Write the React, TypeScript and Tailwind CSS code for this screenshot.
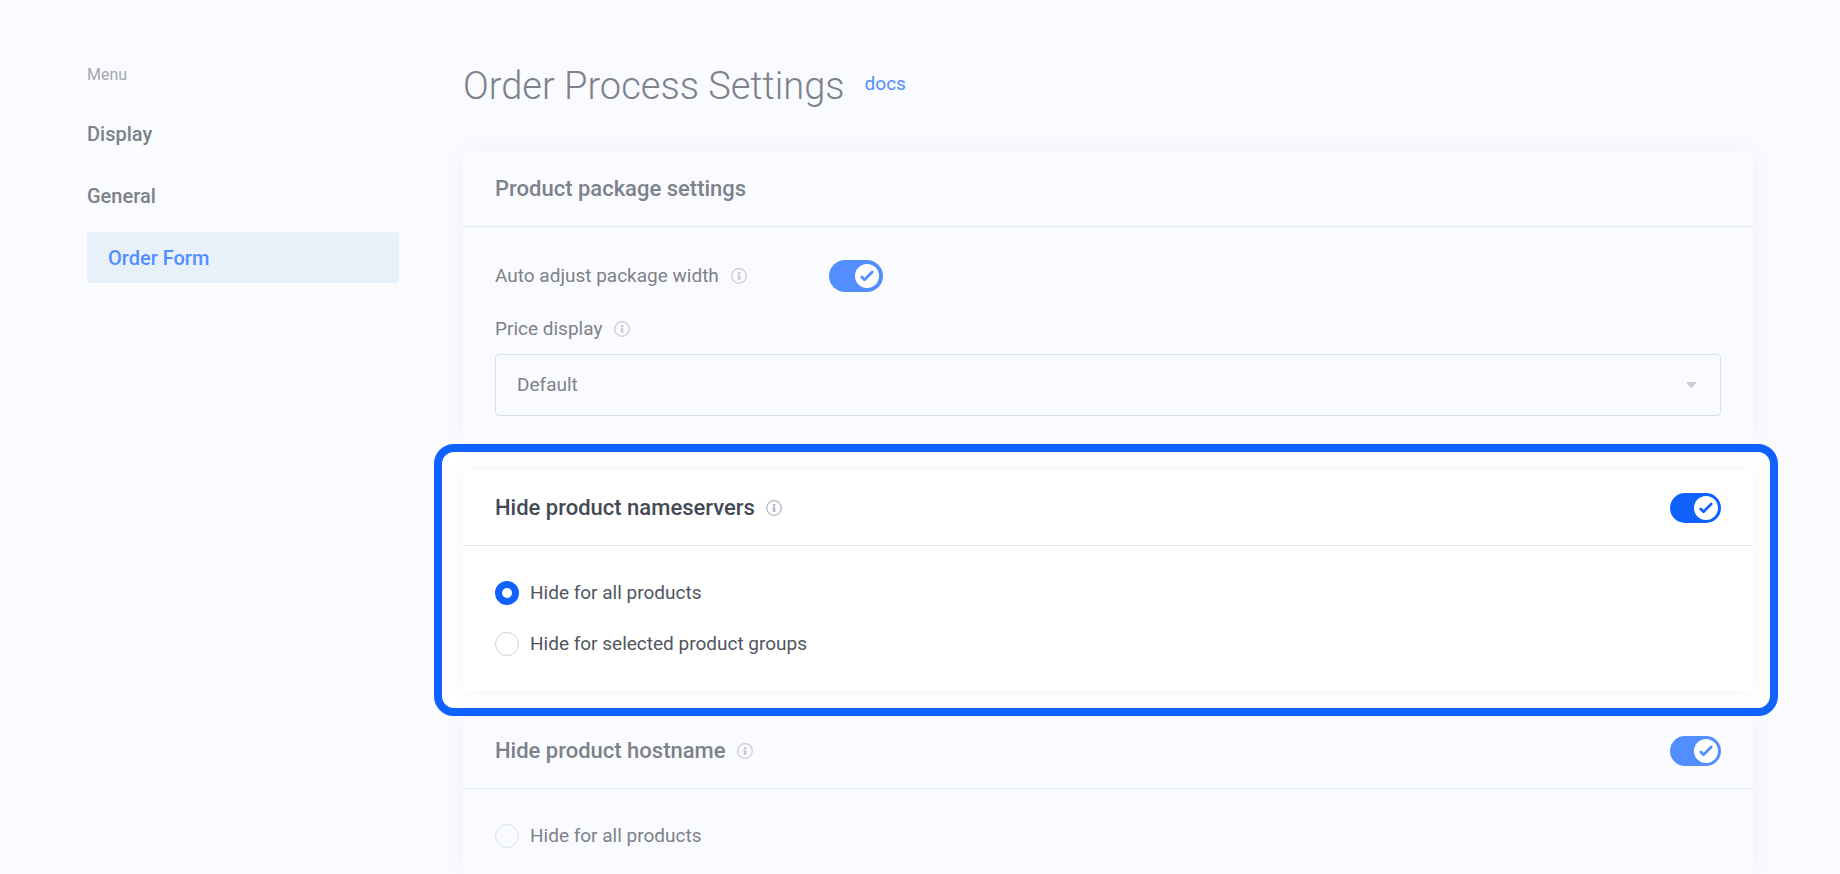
import { useState, type ReactNode } from "react";

function InfoIcon({ muted = false }: { muted?: boolean }) {
  return (
    <svg
      viewBox="0 0 16 16"
      className={`size-4 shrink-0 ${muted ? "text-[#c9ccd4]" : "text-[#b4b8c2]"}`}
      fill="none"
      aria-hidden="true"
    >
      <circle cx="8" cy="8" r="7.3" stroke="currentColor" strokeWidth="1.3" />
      <rect x="6.8" y="4" width="2.6" height="2.4" fill="currentColor" />
      <path d="M6.2 7.2h3.2v4.8H6.8V8.6h-.6z" fill="currentColor" />
    </svg>
  );
}

function Toggle({ label, large = false, muted = false }: { label: string; large?: boolean; muted?: boolean }) {
  const [on, setOn] = useState(true);
  const track = on ? (muted ? "bg-[#538eff]" : "bg-[#0f62fe]") : "bg-[#d5dae3]";
  return (
    <button
      type="button"
      role="switch"
      aria-checked={on}
      aria-label={label}
      onClick={() => setOn(!on)}
      className={`flex shrink-0 items-center rounded-full ${large ? "h-8 w-[54px] px-1" : "h-[30px] w-[51px] px-[3px]"} ${
        on ? "justify-end" : "justify-start"
      } ${track}`}
    >
      <span className="flex size-6 items-center justify-center rounded-full bg-white">
        <svg
          viewBox="0 0 14 12"
          className={`h-3 w-3.5 ${muted ? "text-[#538eff]" : "text-[#0f62fe]"}`}
          fill="none"
          stroke="currentColor"
          strokeWidth="2.7"
          strokeLinecap="round"
          strokeLinejoin="round"
          aria-hidden="true"
        >
          <path d="M1.8 7 4.5 9.7 12.2 2" />
        </svg>
      </span>
    </button>
  );
}

function Radio({
  name,
  label,
  checked,
  onSelect,
  muted = false,
}: {
  name: string;
  label: string;
  checked: boolean;
  onSelect: () => void;
  muted?: boolean;
}) {
  return (
    <label className={`flex h-6 items-center gap-[11px] text-[19px] leading-6 ${muted ? "text-[#7d818b]" : "text-[#505560]"}`}>
      <input
        type="radio"
        name={name}
        checked={checked}
        onChange={onSelect}
        className={`size-6 shrink-0 appearance-none rounded-full border bg-transparent checked:border-[7px] checked:border-[#0f62fe] checked:bg-white ${
          muted ? "border-[#d9dfea]" : "border-[#cfd4e0]"
        }`}
      />
      {label}
    </label>
  );
}

function Card({
  title,
  info = false,
  toggle = false,
  muted = false,
  className,
  children,
}: {
  title: string;
  info?: boolean;
  toggle?: boolean;
  muted?: boolean;
  className: string;
  children: ReactNode;
}) {
  return (
    <section className={`shadow-[0_0_20px_rgba(50,60,80,0.06)] ${muted ? "bg-[#fafbff]" : "bg-white"} ${className}`}>
      <header
        className={`flex h-[76px] items-center justify-between border-b px-8 ${muted ? "border-[#e3e9f2]" : "border-[#dde1e6]"}`}
      >
        <div className="flex items-center gap-[11px]">
          <h2 className={`text-[22px] leading-7 font-medium ${muted ? "text-[#7d818b]" : "text-[#434955]"}`}>{title}</h2>
          {info && <InfoIcon muted={muted} />}
        </div>
        {toggle && <Toggle label={title} muted={muted} />}
      </header>
      {children}
    </section>
  );
}

export default function App() {
  const [nameservers, setNameservers] = useState("all");
  const [hostname, setHostname] = useState("");

  return (
    <div className="flex min-h-screen gap-16 bg-[#fafbff] px-[87px] font-['Roboto',sans-serif] text-[19px] text-[#7d818b]">
      <nav aria-label="Menu" className="w-[312px] shrink-0 pt-[65px]">
        <p className="text-base leading-5 text-[#a4a7af]">Menu</p>
        <ul className="mt-[23px] flex flex-col gap-[11px] text-xl font-medium">
          <li>
            <a href="#display" className="flex h-[51px] items-center">
              Display
            </a>
          </li>
          <li className="flex flex-col gap-[11px]">
            <a href="#general" className="flex h-[51px] items-center">
              General
            </a>
            <a
              href="#order-form"
              aria-current="page"
              className="flex h-[51px] items-center rounded-xs bg-[#e8f0fa] px-[21px] text-[#538eff]"
            >
              Order Form
            </a>
          </li>
        </ul>
      </nav>

      <main className="flex min-w-0 flex-1 flex-col pt-[61px]">
        <div className="mb-10 flex items-start gap-5">
          <h1 className="text-[38px] leading-[50px] font-light">Order Process Settings</h1>
          <a href="#docs" className="pt-[11px] leading-6 text-[#538eff]">
            docs
          </a>
        </div>

        <Card title="Product package settings" muted className="pb-7">
          <div className="px-8 pt-[31px]">
            <div className="flex h-9 items-center">
              <div className="flex w-[334px] items-center gap-3">
                <span>Auto adjust package width</span>
                <InfoIcon muted />
              </div>
              <Toggle label="Auto adjust package width" large muted />
            </div>
            <div className="mt-[19px] flex h-8 items-center gap-3">
              <label htmlFor="price-display">Price display</label>
              <InfoIcon muted />
            </div>
            <div className="relative mt-[9px]">
              <select
                id="price-display"
                className="block h-[62px] w-full appearance-none rounded-sm border border-[#dae1ec] bg-transparent px-[21px]"
              >
                <option>Default</option>
              </select>
              <svg
                viewBox="0 0 10 7"
                className="pointer-events-none absolute top-7 right-[25px] h-1.5 w-[9px] text-[#c9ccd4]"
                fill="currentColor"
                aria-hidden="true"
              >
                <path d="M1 0h8a1 1 0 0 1 .8 1.9L5.8 6.4a1 1 0 0 1-1.6 0L.2 1.9A1 1 0 0 1 1 0z" />
              </svg>
            </div>
          </div>
        </Card>

        <div className="relative z-10 -mr-[25px] -mb-[3px] -ml-[29px] rounded-[20px] border-8 border-[#0f62fe] bg-white pt-[18px] pr-[17px] pb-[17px] pl-[21px]">
          <Card title="Hide product nameservers" info toggle className="">
            <div className="flex flex-col gap-[27px] px-8 py-[35px]">
              <Radio
                name="nameservers"
                label="Hide for all products"
                checked={nameservers === "all"}
                onSelect={() => setNameservers("all")}
              />
              <Radio
                name="nameservers"
                label="Hide for selected product groups"
                checked={nameservers === "groups"}
                onSelect={() => setNameservers("groups")}
              />
            </div>
          </Card>
        </div>

        <Card title="Hide product hostname" info toggle muted className="flex-1">
          <div className="px-8 pt-[35px]">
            <Radio
              name="hostname"
              label="Hide for all products"
              checked={hostname === "all"}
              onSelect={() => setHostname("all")}
              muted
            />
          </div>
        </Card>
      </main>
    </div>
  );
}
